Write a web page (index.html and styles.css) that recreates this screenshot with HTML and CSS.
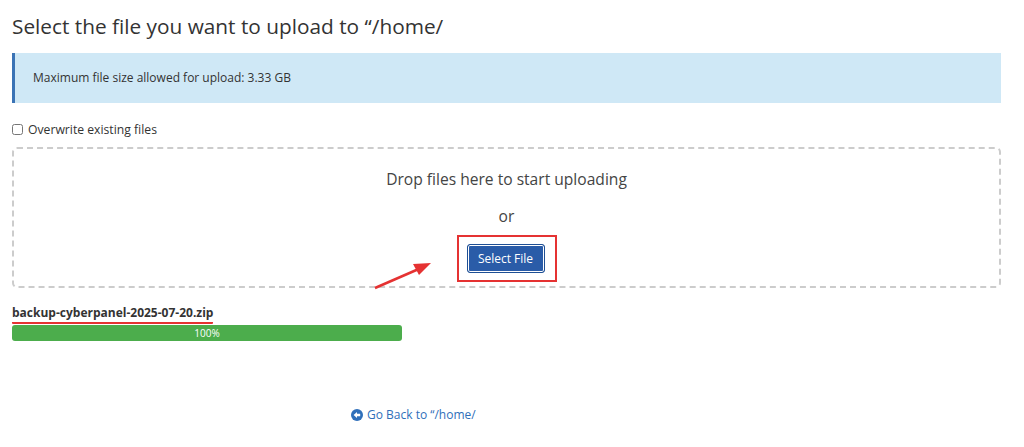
FILE: index.html
```html
<!DOCTYPE html>
<html lang="en">
<head>
<meta charset="UTF-8">
<meta name="viewport" content="width=device-width, initial-scale=1.0">
<title>File Upload</title>
<link rel="stylesheet" href="styles.css">
</head>
<body>

<div class="upload-page">
  <h1>Select the file you want to upload to “/home/</h1>

  <div class="info-box">Maximum file size allowed for upload: 3.33 GB</div>

  <label class="overwrite">
    <input type="checkbox" id="overwrite"> Overwrite existing files
  </label>

  <div class="drop-zone">
    <p class="drop-text">Drop files here to start uploading</p>
    <p class="or">or</p>
    <div class="highlight">
      <button class="select-btn" type="button">Select File</button>
    </div>
    <svg class="arrow" width="64" height="32" viewBox="0 0 64 32">
      <line x1="2" y1="30" x2="48" y2="10" stroke="#e53232" stroke-width="2.5"/>
      <polygon points="58,5 40,6 46,17" fill="#e53232"/>
    </svg>
  </div>

  <div class="file-item">
    <div class="file-name">backup-cyberpanel-2025-07-20.zip</div>
    <div class="progress">
      <div class="progress-bar" style="width: 100%;">100%</div>
    </div>
  </div>

  <div class="back">
    <a href="#">
      <svg width="12" height="12" viewBox="0 0 12 12">
        <circle cx="6" cy="6" r="6" fill="#2f6fba"/>
        <path d="M2.6 6 L6 3 V4.8 H9.2 V7.2 H6 V9 Z" fill="#fff"/>
      </svg>
      Go Back to “/home/
    </a>
  </div>
</div>

</body>
</html>
```

FILE: styles.css
```css
body {
  margin: 0;
  padding: 0;
  font-family: "Open Sans", Arial, sans-serif;
  font-size: 13px;
  color: #333;
  background: #fff;
}

.upload-page {
  padding: 0 23px 0 12px;
}

h1 {
  margin: 0;
  padding-top: 10px;
  font-size: 20.8px;
  font-weight: 400;
  line-height: 32px;
  color: #333;
}

.info-box {
  margin-top: 11px;
  height: 50px;
  line-height: 50px;
  padding-left: 18px;
  background-color: #cfe8f6;
  border-left: 3px solid #3a73b5;
  font-size: 12px;
  color: #333;
}

.overwrite {
  display: flex;
  align-items: center;
  gap: 5px;
  margin-top: 16px;
  height: 20px;
  font-size: 12.2px;
}

.overwrite input {
  margin: 0;
  width: 11px;
  height: 11px;
}

.drop-zone {
  position: relative;
  margin-top: 8px;
  height: 137px;
  border: 2px dashed #ccc;
  border-radius: 5px;
  display: flex;
  flex-direction: column;
  align-items: center;
}

.drop-text {
  margin: 19px 0 0;
  font-size: 15.6px;
  line-height: 22px;
  color: #444;
}

.or {
  margin: 15px 0 0;
  font-size: 15.6px;
  line-height: 22px;
  color: #444;
}

.highlight {
  margin-top: 8px;
  padding: 7px 10px 7px 8px;
  border: 2px solid #e53232;
}

.select-btn {
  display: block;
  width: 78px;
  height: 29px;
  background-color: #2a5ca8;
  border: 1px solid #1e4f94;
  border-radius: 3px;
  box-shadow: inset 0 0 0 1px #fff;
  color: #fff;
  font-family: "Open Sans", Arial, sans-serif;
  font-size: 12px;
  cursor: pointer;
}

.arrow {
  position: absolute;
  left: 359px;
  top: 109px;
}

.file-item {
  margin-top: 15px;
}

.file-name {
  display: inline-block;
  font-size: 12px;
  font-weight: 700;
  line-height: 16px;
  padding-bottom: 1px;
  border-bottom: 2px solid #e53232;
  border-radius: 1px;
}

.progress {
  margin-top: 1px;
  width: 390px;
  height: 16px;
  background: #f5f5f5;
  border-radius: 3px;
  overflow: hidden;
}

.progress-bar {
  height: 100%;
  background-color: #4cad4c;
  color: #fff;
  font-size: 10px;
  line-height: 16px;
  text-align: center;
}

.back {
  margin-top: 65px;
  padding-left: 339px;
  font-size: 12px;
}

.back a {
  display: inline-flex;
  align-items: center;
  gap: 4px;
  color: #2f6fba;
  text-decoration: none;
}

.back a:hover {
  text-decoration: underline;
}
```
